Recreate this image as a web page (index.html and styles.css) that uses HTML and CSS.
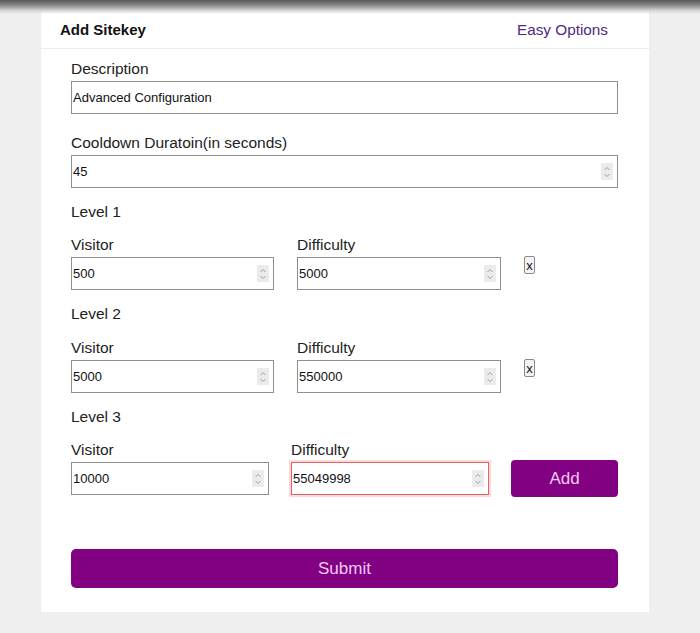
FILE: index.html
```html
<!DOCTYPE html>
<html>
<head>
<meta charset="utf-8">
<link rel="stylesheet" href="styles.css">
</head>
<body>
<div class="topshade"></div>
<div class="card">
  <div class="card-header">
    <span class="title">Add Sitekey</span>
    <a class="easy">Easy Options</a>
  </div>
  <form class="form">
    <label class="label">Description</label>
    <div class="field"><span class="value">Advanced Configuration</span></div>

    <label class="label gap-top">Cooldown Duratoin(in seconds)</label>
    <div class="field"><span class="value">45</span><span class="spin"><svg width="8" height="14" viewBox="0 0 8 14"><path d="M1.5 5 L4 2.5 L6.5 5 M1.5 9 L4 11.5 L6.5 9" fill="none" stroke="#a0a0a0" stroke-width="1"/></svg></span></div>

    <div class="level-title">Level 1</div>
    <div class="level">
      <div class="col">
        <label class="label">Visitor</label>
        <div class="field"><span class="value">500</span><span class="spin"><svg width="8" height="14" viewBox="0 0 8 14"><path d="M1.5 5 L4 2.5 L6.5 5 M1.5 9 L4 11.5 L6.5 9" fill="none" stroke="#a0a0a0" stroke-width="1"/></svg></span></div>
      </div>
      <div class="col">
        <label class="label">Difficulty</label>
        <div class="field"><span class="value">5000</span><span class="spin"><svg width="8" height="14" viewBox="0 0 8 14"><path d="M1.5 5 L4 2.5 L6.5 5 M1.5 9 L4 11.5 L6.5 9" fill="none" stroke="#a0a0a0" stroke-width="1"/></svg></span></div>
      </div>
      <div class="col col-x"><button type="button" class="xbtn">x</button></div>
    </div>

    <div class="level-title">Level 2</div>
    <div class="level second">
      <div class="col">
        <label class="label">Visitor</label>
        <div class="field"><span class="value">5000</span><span class="spin"><svg width="8" height="14" viewBox="0 0 8 14"><path d="M1.5 5 L4 2.5 L6.5 5 M1.5 9 L4 11.5 L6.5 9" fill="none" stroke="#a0a0a0" stroke-width="1"/></svg></span></div>
      </div>
      <div class="col">
        <label class="label">Difficulty</label>
        <div class="field"><span class="value">550000</span><span class="spin"><svg width="8" height="14" viewBox="0 0 8 14"><path d="M1.5 5 L4 2.5 L6.5 5 M1.5 9 L4 11.5 L6.5 9" fill="none" stroke="#a0a0a0" stroke-width="1"/></svg></span></div>
      </div>
      <div class="col col-x"><button type="button" class="xbtn">x</button></div>
    </div>

    <div class="level-title">Level 3</div>
    <div class="level last">
      <div class="col">
        <label class="label">Visitor</label>
        <div class="field"><span class="value">10000</span><span class="spin"><svg width="8" height="14" viewBox="0 0 8 14"><path d="M1.5 5 L4 2.5 L6.5 5 M1.5 9 L4 11.5 L6.5 9" fill="none" stroke="#a0a0a0" stroke-width="1"/></svg></span></div>
      </div>
      <div class="col">
        <label class="label">Difficulty</label>
        <div class="field invalid"><span class="value">55049998</span><span class="spin"><svg width="8" height="14" viewBox="0 0 8 14"><path d="M1.5 5 L4 2.5 L6.5 5 M1.5 9 L4 11.5 L6.5 9" fill="none" stroke="#a0a0a0" stroke-width="1"/></svg></span></div>
      </div>
      <div class="col col-add"><button type="button" class="btn add">Add</button></div>
    </div>

    <button type="button" class="btn submit">Submit</button>
  </form>
</div>
</body>
</html>
```
FILE: styles.css
```css
html, body {
  margin: 0;
  padding: 0;
}
body {
  background: #efefef;
  font-family: "Liberation Sans", Arial, sans-serif;
  color: #222;
  width: 700px;
  height: 633px;
  overflow: hidden;
  position: relative;
}
.topshade {
  position: absolute;
  left: 0;
  top: 0;
  width: 700px;
  height: 14px;
  background: linear-gradient(to bottom, #585858 0%, #848484 35%, #d4d4d4 75%, rgba(239,239,239,0) 100%);
  z-index: 2;
}
.card {
  margin: 9px 0 0 41px;
  width: 608px;
  height: 603px;
  background: #fff;
  box-sizing: border-box;
}
.card-header {
  height: 40px;
  box-sizing: border-box;
  border-bottom: 1px solid #ececec;
  display: flex;
  align-items: center;
  justify-content: space-between;
  padding: 2px 41px 0 19px;
}
.title {
  font-weight: bold;
  font-size: 15px;
  color: #111;
}
.easy {
  font-size: 15.3px;
  color: #4d2b7f;
}
.form {
  padding: 10px 31px 0 30px;
  display: flex;
  flex-direction: column;
}
.label {
  display: block;
  font-size: 15.5px;
  line-height: 19px;
  color: #222;
  margin-bottom: 3px;
}
.gap-top {
  margin-top: 19px;
}
.field {
  height: 33px;
  box-sizing: border-box;
  border: 1px solid #8f8f8f;
  display: flex;
  align-items: center;
  padding: 0 4px 0 1px;
  background: #fff;
}
.value {
  flex: 1;
  font-size: 13px;
  color: #111;
}
.spin {
  width: 12px;
  height: 17px;
  background: #ebebeb;
  display: flex;
  align-items: center;
  justify-content: center;
}
.level-title {
  font-size: 15.5px;
  line-height: 19px;
  margin-top: 14px;
}
.level {
  display: grid;
  grid-template-columns: 203px 204px 33px;
  column-gap: 23px;
  margin-top: 14px;
}
.level.second {
  margin-top: 15px;
}
.level .label {
  margin-bottom: 3px;
}
.level.last {
  grid-template-columns: 198px 198px 107px;
  column-gap: 22px;
  margin-top: 14px;
}
.col-x {
  display: flex;
  align-items: flex-start;
  padding-top: 21px;
}
.xbtn {
  width: 11px;
  height: 18px;
  padding: 0;
  border: 1px solid #8a8a8a;
  border-radius: 2px;
  background: #f3f3f3;
  font-family: "Liberation Sans", Arial, sans-serif;
  font-size: 13px;
  line-height: 15px;
  color: #111;
}
.col-add {
  display: flex;
  align-items: flex-end;
}
.btn {
  background: #820082;
  color: #f6c8f6;
  border: none;
  border-radius: 4px;
  font-family: "Liberation Sans", Arial, sans-serif;
  font-size: 17px;
  cursor: pointer;
}
.add {
  width: 107px;
  height: 37px;
  margin-bottom: -2px;
}
.invalid {
  border-color: #e06464;
  box-shadow: 0 0 0 2px #fbdada;
}
.submit {
  margin-top: 54px;
  height: 39px;
  width: 100%;
  border-radius: 5px;
}
```
